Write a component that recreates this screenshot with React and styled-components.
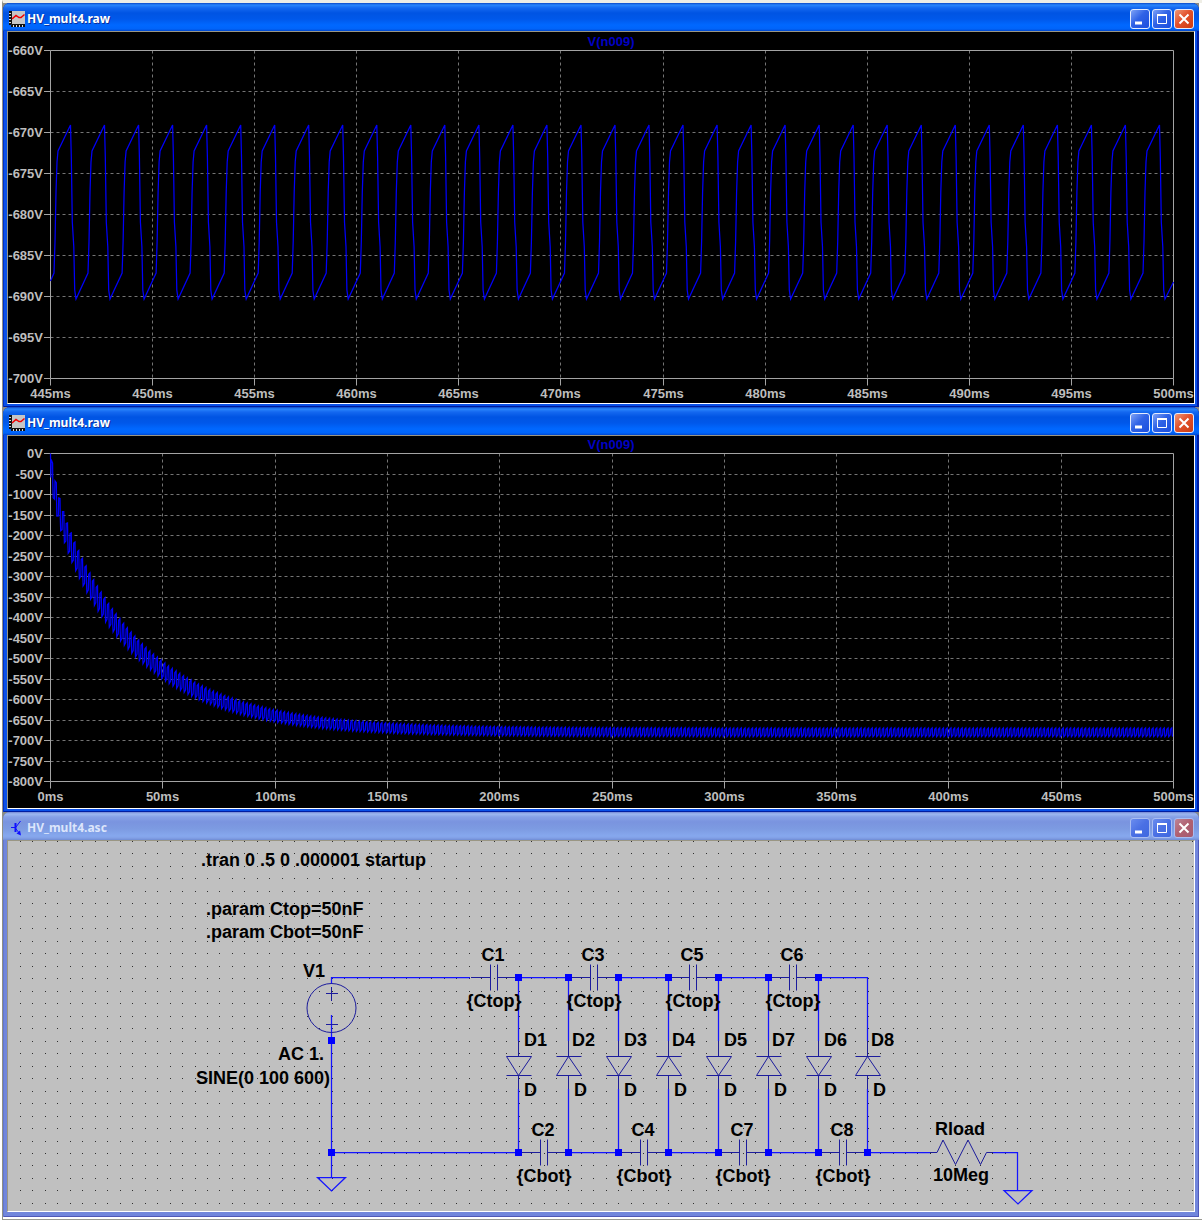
import React from "react";
import styled, { createGlobalStyle } from "styled-components";

const GlobalStyle = createGlobalStyle`
  *, *::before, *::after { box-sizing: border-box; }
  body { margin: 0; background: #fff; font-family: "Liberation Sans", Arial, sans-serif; }
`;

const Workspace = styled.main`
  margin-left: 2px;
  padding: 0 3px 2px 0;
  border-left: 1px solid #8f8f86;
  border-bottom: 1px solid #9a9a92;
  display: flex;
  flex-direction: column;
  border-top: 3px solid #efeee6;
`;

const Desk = styled.div`
  background: #8a8a84;
  display: flex;
  flex-direction: column;
`;

const Frame = styled.section`
  display: flex;
  flex-direction: column;
  border-radius: 7px 7px 0 0;
  overflow: hidden;
  padding: 0 4px ${(p) => (p.$active ? 3 : 5)}px;
  background: ${(p) => (p.$active ? "#0a50e8" : "#7186dc")};
  box-shadow: ${(p) =>
    p.$active
      ? "inset 1px 0 #0030c8, inset -2px -1px #001da0"
      : "inset 1px 0 #6478d0, inset -1px -1px #5058b8"};
`;

const TitleBar = styled.header`
  display: flex;
  align-items: center;
  gap: 2px;
  height: 28px;
  margin: 0 -4px;
  padding: 3px 5px 0 6px;
  background: ${(p) =>
    p.$active
      ? "linear-gradient(#0a48c8 0, #2a86fc 2px, #1468f0 5px, #0054e3 10px, #0058ea 16px, #0068ff 22px, #0064fa 26px, #0046cc 28px)"
      : "linear-gradient(#7486d4 0, #9db8f0 2px, #86a0e6 5px, #7a94df 10px, #7d9be2 17px, #86a8ee 24px, #82a0e6 26px, #6f8cd4 28px)"};
`;

const Caption = styled.h1`
  flex: 1;
  margin: 0;
  font: bold 12px/16px "Noto Sans", "Open Sans", sans-serif;
  color: ${(p) => (p.$active ? "#fff" : "#dce5fb")};
  text-shadow: ${(p) => (p.$active ? "1px 1px #0a2f9c" : "none")};
`;

const Controls = styled.div`
  display: flex;
  gap: 2px;
`;

const ControlButton = styled.button`
  display: grid;
  place-items: center;
  width: 20px;
  height: 20px;
  padding: 0;
  border: 1px solid ${(p) => (p.$active ? "#e4ecff" : "#a9bdf2")};
  border-radius: 3px;
  background: ${(p) => {
    if (p.$close) {
      return p.$active
        ? "linear-gradient(135deg, #f09878, #e2512c 45%, #cc3c12)"
        : "linear-gradient(135deg, #bd8496, #b06070 50%, #a45a72)";
    }
    return p.$active
      ? "linear-gradient(135deg, #7ea2f6, #2f62e6 45%, #1b4ede)"
      : "linear-gradient(135deg, #6a8cee, #4a70e4 50%, #3f68e0)";
  }};
`;

const Client = styled.div`
  border: 1px solid;
  border-color: #9a9684 #fff #fff #9a9684;
  background: ${(p) => p.$tone};
`;

const Drawing = styled.svg`
  display: block;
  width: 100%;
  height: auto;
`;

const AxisText = styled.text`
  font: bold 13px "Liberation Sans", Arial, sans-serif;
  fill: ${(p) => (p.$trace ? "#0000c4" : "#bdbdbd")};
`;

const SchematicText = styled.text`
  font: bold 18px "Liberation Sans", Arial, sans-serif;
  fill: #000;
`;

const WaveIcon = () => (
  <svg width="16" height="16" viewBox="0 0 16 16" aria-hidden="true">
    <rect x="2" width="14" height="13" fill="#c6c6c6" />
    <path d="M2.5 0v13.5H16" fill="none" stroke="#111" />
    <path d="M1 0v14M2 15H16" fill="none" stroke="#111" strokeWidth="2" strokeDasharray="2 1" />
    <path d="M1 0v14M2 15H16" fill="none" stroke="#ddd" strokeWidth="2" strokeDasharray="1 2" strokeDashoffset="1" />
    <path d="M3 8L7 4.500L10 6.500L12 6.500L15.500 3.500" fill="none" stroke="#f00000" strokeWidth="1.5" />
  </svg>
);

const TransistorIcon = () => (
  <svg width="16" height="16" viewBox="0 0 16 16" aria-hidden="true">
    <path d="M2 7.500H6M7 7L11.500 1M7 9L11 14" stroke="#1010ff" fill="none" />
    <path d="M6.500 3v9" stroke="#1010ff" strokeWidth="2" />
    <path d="M12 15.500L7.500 13.500L11 10.500Z" fill="#1010ff" />
  </svg>
);

function Window({ title, icon, active, tone, children }) {
  return (
    <Frame $active={active} aria-label={title}>
      <TitleBar $active={active}>
        {icon}
        <Caption $active={active}>{title}</Caption>
        <Controls>
          <ControlButton $active={active} type="button" aria-label="Minimize">
            <svg width="14" height="14"><path d="M2 11h7" stroke="#fff" strokeWidth="3" /></svg>
          </ControlButton>
          <ControlButton $active={active} type="button" aria-label="Maximize">
            <svg width="14" height="14" fill="none" stroke="#fff">
              <path d="M2.500 2.500h9v9h-9z" />
              <path d="M2 3h10" strokeWidth="2" />
            </svg>
          </ControlButton>
          <ControlButton $active={active} $close type="button" aria-label="Close">
            <svg width="14" height="14"><path d="M2.500 2.500l9 9m0-9l-9 9" stroke="#fff" strokeWidth="2" /></svg>
          </ControlButton>
        </Controls>
      </TitleBar>
      <Client $tone={tone}>{children}</Client>
    </Frame>
  );
}

const LEFT = 42.5;
const RIGHT = 1165.5;
const TOP = 18.5;
const BOTTOM = 346.5;
const crisp = (v) => Math.floor(v) + 0.5;

function Plot({ originY, height, yLabels, xLabels, trace }) {
  const ys = yLabels.map((_, i) => crisp(TOP + (i * (BOTTOM - TOP)) / (yLabels.length - 1)));
  const xs = xLabels.map((_, i) => crisp(LEFT + (i * (RIGHT - LEFT)) / (xLabels.length - 1)));
  return (
    <Drawing viewBox={`0 ${originY} 1186 ${height}`} role="img" aria-label="V(n009)">
      <g stroke="#747474" strokeDasharray="3 3">
        {ys.slice(1, -1).map((y) => <path key={y} d={`M${LEFT} ${y}H${RIGHT}`} />)}
        {xs.slice(1, -1).map((x) => <path key={x} d={`M${x} ${TOP}V${BOTTOM}`} />)}
      </g>
      <g stroke="#a4a4a4" fill="none">
        <path d={`M${LEFT} ${TOP}H${RIGHT}V${BOTTOM}H${LEFT}Z`} />
        {ys.map((y) => <path key={y} d={`M36 ${y}H${LEFT}`} />)}
        {xs.map((x) => <path key={x} d={`M${x} ${BOTTOM}v7`} />)}
      </g>
      {yLabels.map((t, i) => (
        <AxisText key={t} x="35" y={ys[i] + 4.5} textAnchor="end">{t}</AxisText>
      ))}
      {xLabels.map((t, i) => (
        <AxisText key={t} x={xs[i]} y="366" textAnchor="middle">{t}</AxisText>
      ))}
      <AxisText $trace x="603" y="14" textAnchor="middle">V(n009)</AxisText>
      <path d={trace} fill="none" stroke="#0000f8" strokeWidth="1.25" />
    </Drawing>
  );
}

function rippleTrace() {
  const period = 34.03;
  const cycle = [[3.5, 241], [4.5, 210], [5.5, 160], [6.5, 130], [7.500, 119], [20, 93], [20.8, 125], [21.8, 190], [23.3, 215], [24.2, 258], [25.5, 267]];
  const pts = [[0, 249]];
  for (let n = 0; n < 33; n += 1) {
    cycle.forEach(([dx, y]) => {
      const x = n * period + dx;
      if (x < 1123) pts.push([x, y]);
    });
  }
  pts.push([1123, 250]);
  return "M" + pts.map(([x, y]) => `${(LEFT + x).toFixed(1)} ${y}`).join("L");
}

function settlingTrace() {
  const shape = [[0.1, -0.6], [0.2, 0.7], [0.55, 1], [0.62, -0.2], [0.72, -1]];
  const pts = [[0, 0]];
  for (let n = 0; n < 300; n += 1) {
    shape.forEach(([phase, level]) => {
      const t = (n + phase) / 0.6;
      const mid = 680 - 571 * Math.exp(-t / 37.6) - 80 * Math.exp(-t / 3.5);
      const swing = 10.5 + 28 * Math.exp(-t / 55);
      pts.push([t, Math.max(0, mid - level * swing)]);
    });
  }
  return "M" + pts.map(([t, v]) => `${(LEFT + t * 2.246).toFixed(1)} ${(TOP + v * 0.41).toFixed(1)}`).join("L");
}

const rippleY = [660, 665, 670, 675, 680, 685, 690, 695, 700].map((v) => `-${v}V`);
const rippleX = Array.from({ length: 12 }, (_, i) => `${445 + i * 5}ms`);
const settlingY = Array.from({ length: 17 }, (_, i) => (i ? `-${i * 50}V` : "0V"));
const settlingX = Array.from({ length: 11 }, (_, i) => `${i * 50}ms`);

const nodes = [518, 568, 618, 668, 718, 768, 818, 867];
const diodes = ["D1", "D2", "D3", "D4", "D5", "D7", "D6", "D8"];
const capacitors = [
  { name: "C1", x: 494, y: 977.5, value: "{Ctop}" },
  { name: "C3", x: 594, y: 977.5, value: "{Ctop}" },
  { name: "C5", x: 693, y: 977.5, value: "{Ctop}" },
  { name: "C6", x: 793, y: 977.5, value: "{Ctop}" },
  { name: "C2", x: 544, y: 1152.5, value: "{Cbot}" },
  { name: "C4", x: 644, y: 1152.5, value: "{Cbot}" },
  { name: "C7", x: 743, y: 1152.5, value: "{Cbot}" },
  { name: "C8", x: 843, y: 1152.5, value: "{Cbot}" },
];

function gridDots() {
  let d = "";
  for (let r = 0; r < 30; r += 1) {
    for (let c = -1; c < 95; c += 1) {
      const x = Math.round(20 + c * 12.465);
      const y = Math.round(841 + r * 12.48) + 0.5;
      if (x > 8) d += `M${x} ${y}h1`;
    }
  }
  return d;
}

function Capacitor({ name, x, y, value }) {
  return (
    <g>
      <path d={`M${x - 23} ${y}H${x - 3.5}M${x + 3.5} ${y}H${x + 23}M${x - 3.5} ${y - 13}v26M${x + 3.5} ${y - 13}v26`} stroke="#1c1c9c" />
      <SchematicText x={x - 1} y={y - 17} textAnchor="middle">{name}</SchematicText>
      <SchematicText x={x} y={y + 29} textAnchor="middle">{value}</SchematicText>
    </g>
  );
}

function Diode({ name, x, up }) {
  const c = x + 0.5;
  const body = up
    ? `M${c - 12} 1056.5h25M${c} 1056.5L${c - 12} 1075.5h25Z`
    : `M${c - 12} 1075.5h25M${c} 1075.5L${c - 12} 1056.5h25Z`;
  return (
    <g>
      <path d={`${body}M${c} 1041V1056M${c} 1076V1089`} fill="none" stroke="#1c1c9c" />
      <SchematicText x={up ? x + 4 : x + 6} y="1046">{name}</SchematicText>
      <SchematicText x={x + 6} y="1096">D</SchematicText>
    </g>
  );
}

const Junction = ({ x, y }) => <path d={`M${x - 3} ${y - 3}h7v7h-7z`} fill="#0000ff" />;

function Schematic() {
  return (
    <Drawing viewBox="8 841 1186 370" role="img" aria-label="Voltage multiplier schematic">
      <path d={gridDots()} stroke="#303030" />
      <g stroke="#1414ff" strokeWidth="1.25" fill="none">
        <path d="M331.5 984V977.500H470M331.500 1015V1177" />
        <path d="M331.5 1152.500H521M519 977.500H571M618 977.500H671M718 977.500H771M818 977.500H867.500" />
        <path d="M568 1152.500H621M669 1152.500H721M768 1152.500H821M867 1152.500H930M993 1152.500H1017.500V1190" />
        <path d="M317.500 1177.500H345.500L331.500 1191ZM1004 1190.500H1032L1018 1204Z" />
        {nodes.map((x) => <path key={x} d={`M${x + 0.5} 977V1041M${x + 0.5} 1089V1153`} />)}
      </g>
      <g stroke="#1c1c9c" fill="none">
        <circle cx="331.5" cy="1008" r="24.5" />
        <path d="M326 993.500h12M331.500 987v14M326 1024.500h12" />
        <path d="M930 1152.500H937L943 1140L955.500 1164.500L968 1140L980.500 1164.500L986.500 1152.500H993" />
      </g>
      {capacitors.map((c) => <Capacitor key={c.name} {...c} />)}
      {diodes.map((name, i) => <Diode key={name} name={name} x={nodes[i]} up={i % 2 === 1} />)}
      {nodes.map((x, i) => (
        <g key={x}>
          {i < 7 && <Junction x={x} y={977} />}
          <Junction x={x} y={1152} />
        </g>
      ))}
      <Junction x={331} y={1040} />
      <Junction x={331} y={1152} />
      <SchematicText x="201" y="866">.tran 0 .5 0 .000001 startup</SchematicText>
      <SchematicText x="206" y="915">.param Ctop=50nF</SchematicText>
      <SchematicText x="206" y="938">.param Cbot=50nF</SchematicText>
      <SchematicText x="303" y="977">V1</SchematicText>
      <SchematicText x="324" y="1060" textAnchor="end">AC 1.</SchematicText>
      <SchematicText x="330" y="1084" textAnchor="end">SINE(0 100 600)</SchematicText>
      <SchematicText x="960" y="1135" textAnchor="middle">Rload</SchematicText>
      <SchematicText x="961" y="1181" textAnchor="middle">10Meg</SchematicText>
    </Drawing>
  );
}

export default function App() {
  return (
    <>
      <GlobalStyle />
      <Workspace>
        <Desk>
          <Window title="HV_mult4.raw" icon={<WaveIcon />} active tone="#000">
            <Plot originY={0} height={371} yLabels={rippleY} xLabels={rippleX} trace={rippleTrace()} />
          </Window>
          <Window title="HV_mult4.raw" icon={<WaveIcon />} active tone="#000">
            <Plot originY={1} height={372} yLabels={settlingY} xLabels={settlingX} trace={settlingTrace()} />
          </Window>
          <Window title="HV_mult4.asc" icon={<TransistorIcon />} active={false} tone="#c0c0c0">
            <Schematic />
          </Window>
        </Desk>
      </Workspace>
    </>
  );
}
